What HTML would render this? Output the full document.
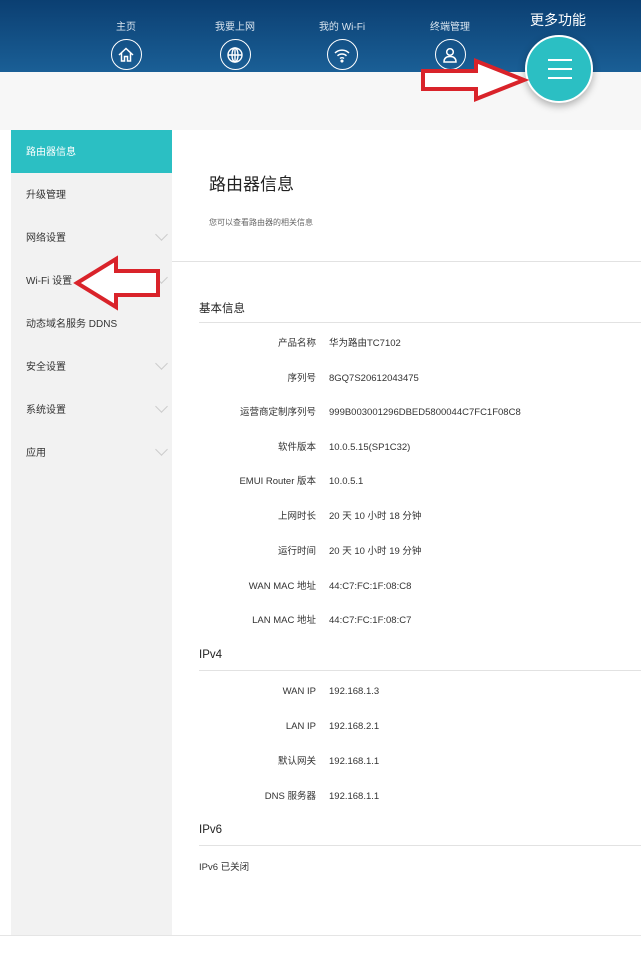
<!DOCTYPE html>
<html><head><meta charset="utf-8"><style>
*{margin:0;padding:0;box-sizing:border-box}
body{width:641px;height:953px;background:#fff;font-family:"Liberation Sans","Noto Sans CJK SC",sans-serif;position:relative;overflow:hidden;color:#333}
.hdr{position:absolute;left:0;top:0;width:641px;height:72px;background:linear-gradient(180deg,#0b3f72,#1a5f96)}
.gray{position:absolute;left:0;top:72px;width:641px;height:58px;background:#f7f7f7}
.nav{position:absolute;top:18px;width:60px;text-align:center;color:#d8e4ef;font-size:10px}
.nav .ic{width:31px;height:31px;border:1.5px solid #fff;border-radius:50%;margin:6px auto 0;display:flex;align-items:center;justify-content:center}
.more{position:absolute;left:530px;top:10px;color:#fff;font-size:14px}
.fab{position:absolute;left:525px;top:35px;width:68px;height:68px;border-radius:50%;background:#2bbfc3;border:2px solid #fff;box-shadow:0 3px 8px rgba(0,0,0,.3)}
.fab i{position:absolute;left:21px;width:24px;height:2px;background:#fff}
.side{position:absolute;left:11px;top:130px;width:161px;height:805px;background:#f2f2f2}
.side div{height:43px;line-height:46px;padding-left:15px;font-size:10px;color:#333;position:relative}
.side div.act{background:#2bbfc3;color:#fff}
.side .ch{position:absolute;right:6px;top:14px;width:9px;height:9px;border-right:1px solid #ccc;border-bottom:1px solid #ccc;transform:rotate(45deg)}
.main{position:absolute;left:172px;top:130px;width:469px;height:805px;background:#fff}
.t{position:absolute;left:209px;top:170px;font-size:17px;color:#222}
.st{position:absolute;left:209px;top:217px;font-size:8px;color:#666}
.hl{position:absolute;height:1px;background:#e2e2e2}
.sec{position:absolute;left:199px;font-size:11.5px;color:#222}
.r{position:absolute;left:172px;width:469px;height:14px;font-size:9.5px;color:#333}
.r span,.r b{display:block;position:absolute;top:0;height:14px;line-height:14px;white-space:nowrap}
.r span{right:325px}
.r b{font-weight:normal;left:157px}
.foot{position:absolute;left:0;top:935px;width:641px;height:1px;background:#e5e5e5}
</style></head><body>
<div class="hdr"></div><div class="gray"></div>
<div class="nav" style="left:96px">主页<div class="ic"><svg width="18" height="18" viewBox="0 0 18 18" fill="none" stroke="#fff" stroke-width="1.5"><path d="M2 9L9 2.5 16 9M4.5 7v8h3v-4.5h3V15h3V7"/></svg></div></div>
<div class="nav" style="left:205px">我要上网<div class="ic"><svg width="18" height="18" viewBox="0 0 18 18" fill="none" stroke="#fff" stroke-width="1.4"><circle cx="9" cy="9" r="7"/><ellipse cx="9" cy="9" rx="3" ry="7"/><path d="M2 9h14M9 2v14"/></svg></div></div>
<div class="nav" style="left:312px">我的 Wi-Fi<div class="ic"><svg width="18" height="18" viewBox="0 0 18 18" fill="none" stroke="#fff" stroke-width="1.5"><path d="M2 7a10 10 0 0 1 14 0M4.5 9.8a6.5 6.5 0 0 1 9 0M7 12.5a3 3 0 0 1 4 0"/><circle cx="9" cy="15" r=".8" fill="#fff"/></svg></div></div>
<div class="nav" style="left:420px">终端管理<div class="ic"><svg width="18" height="18" viewBox="0 0 18 18" fill="none" stroke="#fff" stroke-width="1.5"><circle cx="9" cy="6" r="3.3"/><path d="M3 16c0-4 2.5-5.5 6-5.5s6 1.5 6 5.5z"/></svg></div></div>
<div class="more">更多功能</div>
<div class="fab"><i style="top:22px"></i><i style="top:31px"></i><i style="top:40px"></i></div>
<svg style="position:absolute;left:418px;top:58px" width="112" height="46"><polygon points="5,13 58,13 58,3 106,22 58,41 58,31 5,31" fill="#fff" stroke="#d9232a" stroke-width="4"/></svg>
<div class="side">
<div class="act">路由器信息</div><div>升级管理</div><div>网络设置<i class="ch"></i></div><div>Wi-Fi 设置<i class="ch"></i></div><div>动态域名服务 DDNS</div><div>安全设置<i class="ch"></i></div><div>系统设置<i class="ch"></i></div><div>应用<i class="ch"></i></div>
</div>
<div class="main"></div>
<svg style="position:absolute;left:72px;top:255px" width="92" height="56"><polygon points="5,28 44,4 44,16 86,16 86,40 44,40 44,52" fill="#fff" stroke="#d9232a" stroke-width="4"/></svg>
<div class="t">路由器信息</div>
<div class="st">您可以查看路由器的相关信息</div>
<div class="hl" style="left:172px;top:261px;width:469px"></div>
<div class="sec" style="top:300px">基本信息</div>
<div class="hl" style="left:199px;top:322px;width:442px"></div>
<div class="r" style="top:337px"><span>产品名称</span><b>华为路由TC7102</b></div>
<div class="r" style="top:372px"><span>序列号</span><b>8GQ7S20612043475</b></div>
<div class="r" style="top:406px"><span>运营商定制序列号</span><b>999B003001296DBED5800044C7FC1F08C8</b></div>
<div class="r" style="top:441px"><span>软件版本</span><b>10.0.5.15(SP1C32)</b></div>
<div class="r" style="top:475px"><span>EMUI Router 版本</span><b>10.0.5.1</b></div>
<div class="r" style="top:510px"><span>上网时长</span><b>20 天 10 小时 18 分钟</b></div>
<div class="r" style="top:545px"><span>运行时间</span><b>20 天 10 小时 19 分钟</b></div>
<div class="r" style="top:580px"><span>WAN MAC 地址</span><b>44:C7:FC:1F:08:C8</b></div>
<div class="r" style="top:614px"><span>LAN MAC 地址</span><b>44:C7:FC:1F:08:C7</b></div>
<div class="sec" style="top:649px">IPv4</div>
<div class="hl" style="left:199px;top:670px;width:442px"></div>
<div class="r" style="top:685px"><span>WAN IP</span><b>192.168.1.3</b></div>
<div class="r" style="top:720px"><span>LAN IP</span><b>192.168.2.1</b></div>
<div class="r" style="top:755px"><span>默认网关</span><b>192.168.1.1</b></div>
<div class="r" style="top:790px"><span>DNS 服务器</span><b>192.168.1.1</b></div>
<div class="sec" style="top:824px">IPv6</div>
<div class="hl" style="left:199px;top:845px;width:442px"></div>
<div style="position:absolute;left:199px;top:859px;font-size:9.5px">IPv6 已关闭</div>
<div class="foot"></div>
</body></html>
